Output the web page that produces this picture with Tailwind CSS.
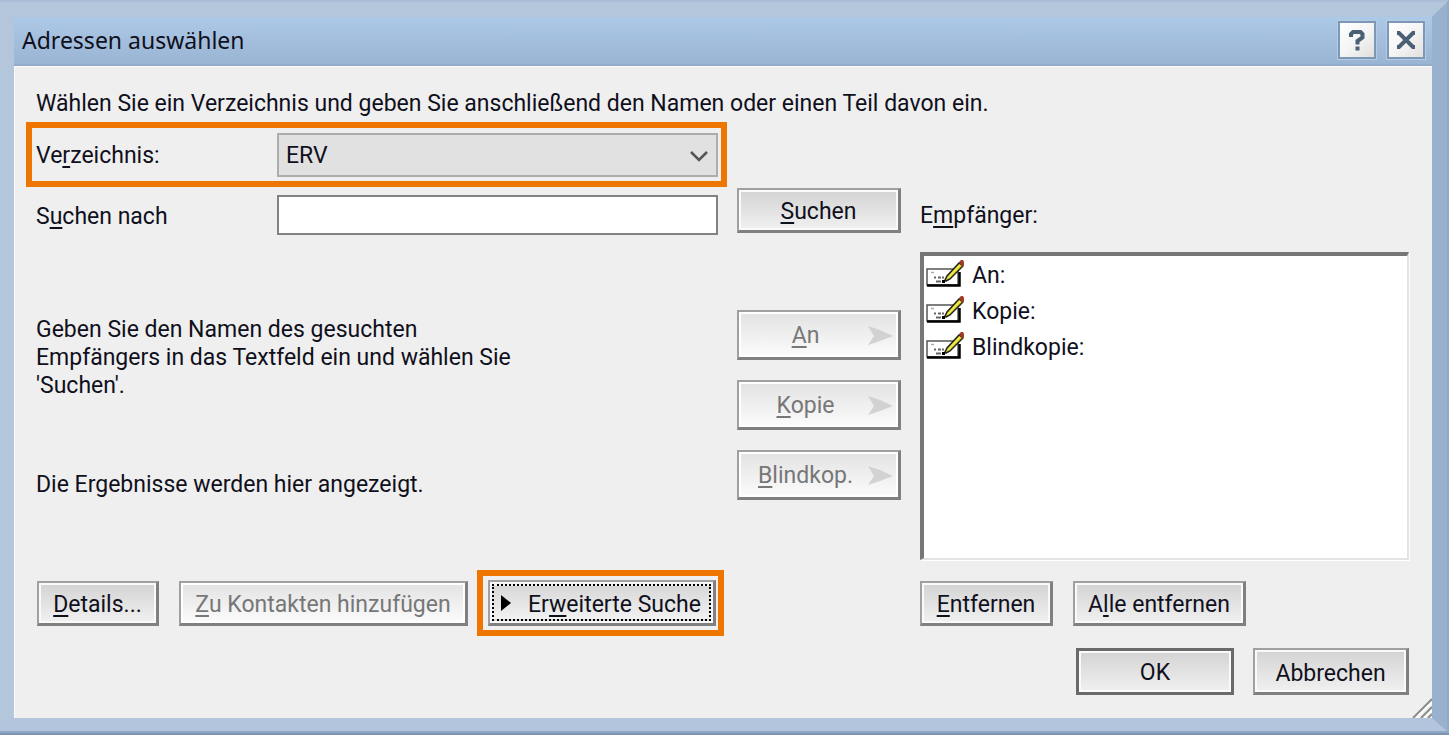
<!DOCTYPE html>
<html lang="de">
	<head>
		<meta charset="UTF-8" />
		<meta name="viewport" content="width=device-width, initial-scale=1.0" />
		<title>Adressen auswählen</title>
		<script src="https://cdn.jsdelivr.net/npm/@tailwindcss/browser@4"></script>
	</head>
	<body class="bg-white font-[Roboto,'Liberation_Sans',sans-serif] text-[23px] leading-[28px] text-[#10101c]">
		<!-- window frame -->
		<div class="border-t-2 border-r-2 border-b-4 border-t-[#b8cade] border-r-[#7f98b8] border-b-[#7c94b4]">
			<div class="border-t-15 border-r-15 border-b-13 border-l-14 border-t-[#b3c6dc] border-r-[#97b1cf] border-b-[#b3c5dc] border-l-[#b3c6dc] outline-2 outline-[#9fb4d0]/60">
				<!-- title bar -->
				<header class="flex h-[49px] items-center justify-between border-b-2 border-[#93acc9] bg-linear-to-b from-[#adc9e8] to-[#9ab5d3] pr-[7px] pb-[2px] pl-[8px]">
					<h1 class="font-['Noto_Sans','Open_Sans',sans-serif]">Adressen auswählen</h1>
					<div class="flex gap-[11px]">
						<button type="button" aria-label="Hilfe" class="flex size-[38px] items-center justify-center border-2 border-[#7c98b6] bg-linear-to-br from-white via-[#f5f5f5] to-[#e2e0de] shadow-[0_0_0_1px_#b5cbe4]">
							<svg class="size-[26px]" viewBox="0 0 26 26" fill="none" stroke="#4a6076" stroke-width="4">
								<path d="M7 10V7L9 5H16.500L18.500 7V10.500L13.500 14V17.500" />
								<path d="M13.500 19.500v4" />
							</svg>
						</button>
						<button type="button" aria-label="Schließen" class="flex size-[38px] items-center justify-center border-2 border-[#7c98b6] bg-linear-to-br from-white via-[#f5f5f5] to-[#e2e0de] shadow-[0_0_0_1px_#b5cbe4]">
							<svg class="size-[26px]" viewBox="0 0 26 26" fill="none" stroke="#4a6076" stroke-width="4">
								<path d="M4 6h2l14 14h2M22 6h-2L6 20H4" />
							</svg>
						</button>
					</div>
				</header>

				<!-- dialog -->
				<form class="relative bg-[#efefef] pt-6 pr-[23px] pb-[23px] pl-3 shadow-[inset_1px_1px_0_#fafafa] [&_u]:decoration-2 [&_u]:underline-offset-[3px] [&_u]:[text-decoration-skip-ink:none]">
					<p class="pl-[10px]">Wählen Sie ein Verzeichnis und geben Sie anschließend den Namen oder einen Teil davon ein.</p>

					<div class="mt-1 flex">
						<div class="flex-1">
							<div class="flex h-[65px] items-center border-6 border-[#ee7500] pr-[3px] pl-1">
								<label for="verzeichnis" class="w-[241px] pt-[3px]">Ve<u>r</u>zeichnis:</label>
								<div class="relative flex-1">
									<select id="verzeichnis" class="h-[44px] w-full appearance-none border-2 border-[#adadad] bg-[#e1e1e1] px-[7px] pt-[3px]">
										<option>ERV</option>
									</select>
									<svg class="pointer-events-none absolute top-[16px] right-[9px] h-[14px] w-[20px]" viewBox="0 0 20 14" fill="none" stroke="#555" stroke-width="2.500">
										<path d="M2 3l8 8 8-8" />
									</svg>
								</div>
							</div>

							<div class="mt-2 flex items-center pr-[9px] pl-[10px]">
								<label for="suche" class="w-[241px] pt-[3px]">S<u>u</u>chen nach</label>
								<input id="suche" type="text" class="h-[40px] min-w-0 flex-1 border-2 border-[#828282] bg-white px-2 outline-none" />
							</div>

							<p class="mt-[81px] pl-[10px]">Geben Sie den Namen des gesuchten<br />Empfängers in das Textfeld ein und wählen Sie<br />'Suchen'.</p>
							<p class="mt-[71px] pl-[10px]">Die Ergebnisse werden hier angezeigt.</p>
						</div>

						<div class="ml-[10px] w-[164px] pt-[66px]">
							<button type="button" class="h-[45px] w-full border-2 border-r-3 border-b-3 border-[#a0a0a0] border-r-[#808080] border-b-[#808080] bg-linear-to-b from-[#d3d3d3] to-[#f1f1f1] pt-[3px] shadow-[inset_0_0_0_2px_#fafafa]"><u>S</u>uchen</button>
							<div class="mt-[77px] flex flex-col gap-5 text-[#777]">
								<button type="button" disabled class="relative h-[50px] w-full border-2 border-r-3 border-b-3 border-[#a0a0a0] border-r-[#808080] border-b-[#808080] bg-linear-to-b from-[#e2e2e2] to-[#fcfcfc] pt-[3px] pr-[26px] shadow-[inset_0_0_0_2px_#fff]">
									<u>A</u>n
									<svg class="absolute top-[13px] right-[4px] h-[22px] w-[26px]" viewBox="0 0 26 22" fill="#d2d2d2"><path d="M0 1l12 4 13 6-13 5-12 4 6-9z" /></svg>
								</button>
								<button type="button" disabled class="relative h-[50px] w-full border-2 border-r-3 border-b-3 border-[#a0a0a0] border-r-[#808080] border-b-[#808080] bg-linear-to-b from-[#e2e2e2] to-[#fcfcfc] pt-[3px] pr-[26px] shadow-[inset_0_0_0_2px_#fff]">
									<u>K</u>opie
									<svg class="absolute top-[13px] right-[4px] h-[22px] w-[26px]" viewBox="0 0 26 22" fill="#d2d2d2"><path d="M0 1l12 4 13 6-13 5-12 4 6-9z" /></svg>
								</button>
								<button type="button" disabled class="relative h-[50px] w-full border-2 border-r-3 border-b-3 border-[#a0a0a0] border-r-[#808080] border-b-[#808080] bg-linear-to-b from-[#e2e2e2] to-[#fcfcfc] pt-[3px] pr-[26px] shadow-[inset_0_0_0_2px_#fff]">
									<u>B</u>lindkop.
									<svg class="absolute top-[13px] right-[4px] h-[22px] w-[26px]" viewBox="0 0 26 22" fill="#d2d2d2"><path d="M0 1l12 4 13 6-13 5-12 4 6-9z" /></svg>
								</button>
							</div>
						</div>

						<div class="ml-[19px] w-[489px] pt-20">
							<h2 id="empfaenger">E<u>m</u>pfänger:</h2>
							<ul aria-labelledby="empfaenger" class="mt-[22px] h-[308px] border-2 border-t-4 border-l-4 border-t-[#777] border-r-[#e3e3e3] border-b-[#e3e3e3] border-l-[#777] bg-white pl-[2px] shadow-[1px_1px_0_#fff]">
								<li class="flex h-9 items-center gap-2">
									<svg class="h-[28px] w-[38px]" viewBox="0 0 38 28"><use href="#karte" /></svg>
									<span class="pt-[3px]">An:</span>
								</li>
								<li class="flex h-9 items-center gap-2">
									<svg class="h-[28px] w-[38px]" viewBox="0 0 38 28"><use href="#karte" /></svg>
									<span class="pt-[3px]">Kopie:</span>
								</li>
								<li class="flex h-9 items-center gap-2">
									<svg class="h-[28px] w-[38px]" viewBox="0 0 38 28"><use href="#karte" /></svg>
									<span class="pt-[3px]">Blindkopie:</span>
								</li>
							</ul>
						</div>
					</div>

					<div class="mt-[10px] flex items-center pl-[11px]">
						<button type="button" class="h-[45px] w-[122px] border-2 border-r-3 border-b-3 border-[#a0a0a0] border-r-[#808080] border-b-[#808080] bg-linear-to-b from-[#d3d3d3] to-[#f1f1f1] pt-[5px] shadow-[inset_0_0_0_2px_#fafafa]"><u>D</u>etails...</button>
						<button type="button" disabled class="ml-5 h-[45px] w-[289px] border-2 border-r-3 border-b-3 border-[#a0a0a0] border-r-[#808080] border-b-[#808080] bg-linear-to-b from-[#e2e2e2] to-[#fcfcfc] pt-[5px] text-[#777] shadow-[inset_0_0_0_2px_#fff]"><u>Z</u>u Kontakten hinzufügen</button>
						<div class="ml-[9px] border-6 border-[#ee7500] py-1 pr-[2px] pl-[5px]">
							<button type="button" class="h-[46px] w-[228px] border-2 border-r-3 border-b-3 border-[#a0a0a0] border-r-[#808080] border-b-[#808080] bg-[#f8f8f8] p-[2px]">
								<span class="flex h-full items-center gap-[17px] border-2 border-dotted border-black bg-linear-to-b from-[#d8d8d8] to-[#f1f1f1] pl-[7px]">
									<svg class="h-[16px] w-[10px] shrink-0" viewBox="0 0 10 16"><path d="M0 0l10 8-10 8z" /></svg>
									<span class="pt-[5px] whitespace-nowrap">Er<u>w</u>eiterte Suche</span>
								</span>
							</button>
						</div>
						<div class="ml-auto flex w-[489px] gap-5">
							<button type="button" class="h-[45px] w-[133px] border-2 border-r-3 border-b-3 border-[#a0a0a0] border-r-[#808080] border-b-[#808080] bg-linear-to-b from-[#d3d3d3] to-[#f1f1f1] pt-[5px] shadow-[inset_0_0_0_2px_#fafafa]"><u>E</u>ntfernen</button>
							<button type="button" class="h-[45px] w-[173px] border-2 border-r-3 border-b-3 border-[#a0a0a0] border-r-[#808080] border-b-[#808080] bg-linear-to-b from-[#d3d3d3] to-[#f1f1f1] pt-[5px] shadow-[inset_0_0_0_2px_#fafafa]">A<u>l</u>le entfernen</button>
						</div>
					</div>

					<div class="mt-3 flex justify-end gap-[19px]">
						<button type="submit" class="h-[47px] w-[158px] border-3 border-[#6a6a6a] bg-linear-to-b from-[#d3d3d3] to-[#f1f1f1] pt-[3px] shadow-[inset_0_0_0_2px_#fafafa]">OK</button>
						<button type="button" class="h-[47px] w-[156px] border-2 border-r-3 border-b-3 border-[#a0a0a0] border-r-[#808080] border-b-[#808080] bg-linear-to-b from-[#d3d3d3] to-[#f1f1f1] pt-[5px] shadow-[inset_0_0_0_2px_#fafafa]">Abbrechen</button>
					</div>

					<!-- resize grip -->
					<svg class="absolute right-0 bottom-0 size-[20px]" viewBox="0 0 20 20" fill="none" stroke-width="2">
						<path d="M4 20L20 4M12 20l8-8" stroke="#fff" />
						<path d="M1 20L20 1M9 20L20 9M16 20l4-4" stroke="#8c8c8c" />
					</svg>
				</form>
			</div>
		</div>

		<!-- card with pencil -->
		<svg class="hidden">
			<symbol id="karte" viewBox="0 0 38 28">
				<path d="M1 9h31v16H1z" fill="#fff" stroke="#555" stroke-width="1.500" />
				<path d="M1 25.500h32.500V12" fill="none" stroke="#000" stroke-width="2.500" />
				<path d="M5 12.500h3" stroke="#aaa" stroke-width="1.500" />
				<path d="M8 17.500h2m2 0h3m1 0h2M10 21.500h5" stroke="#666" stroke-width="2" />
				<path d="M19 20l2-4L33 3l4 3-13 13-4 2z" fill="#d8d020" stroke="#222" stroke-width="1.500" />
				<path d="M22 18L34 5" stroke="#f3ec55" stroke-width="1.500" />
				<path d="M16 20h3v3h-3z" />
				<path d="M33 2l2-2h2l1 2v3l-2 2z" fill="#a03a28" />
			</symbol>
		</svg>
	</body>
</html>
